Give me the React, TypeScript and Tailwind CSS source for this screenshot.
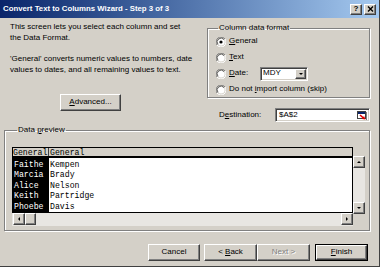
import React from "react"

const raised =
  "border border-t-white border-l-white border-r-[#404040] border-b-[#404040] shadow-[inset_-1px_-1px_0_#808080] bg-[#d4d0c8]"
const sunken =
  "border border-t-[#808080] border-l-[#808080] border-r-white border-b-white shadow-[inset_1px_1px_0_#404040,inset_-1px_-1px_0_#d4d0c8]"

function Radio({ checked = false }: { checked?: boolean }) {
  return (
    <svg width="10" height="10" viewBox="0 0 10 10" className="shrink-0">
      <path d="M9 2 A4.5 4.5 0 0 0 1 8" fill="none" stroke="#808080" strokeWidth="1" />
      <path d="M1 8 A4.5 4.5 0 0 0 9 2" fill="none" stroke="#ffffff" strokeWidth="1" />
      <circle cx="5" cy="5" r="3.6" fill="#ffffff" />
      <path d="M8 2.6 A3.4 3.4 0 0 0 2 7.4" fill="none" stroke="#404040" strokeWidth="0.8" />
      {checked && <circle cx="5" cy="5" r="1.6" fill="#000000" />}
    </svg>
  )
}

function Arrow({ dir }: { dir: "up" | "down" | "left" | "right" }) {
  const pts = {
    up: "2,5 6,5 4,3",
    down: "2,3 6,3 4,5",
    left: "5,2 5,6 3,4",
    right: "3,2 3,6 5,4",
  }[dir]
  return (
    <svg width="8" height="8" viewBox="0 0 8 8">
      <polygon points={pts} fill="#000" />
    </svg>
  )
}

function ScrollBtn({ dir }: { dir: "up" | "down" | "left" | "right" }) {
  return (
    <div className={`${raised} w-[12px] h-[12px] flex items-center justify-center shrink-0`}>
      <Arrow dir={dir} />
    </div>
  )
}

function Button({
  children,
  className = "",
  isDefault = false,
}: {
  children: React.ReactNode
  className?: string
  isDefault?: boolean
}) {
  if (isDefault) {
    return (
      <div className={`border border-black ${className}`}>
        <div className={`${raised} h-full flex items-center justify-center`}>{children}</div>
      </div>
    )
  }
  return <div className={`${raised} flex items-center justify-center ${className}`}>{children}</div>
}

const rows = [
  ["Faithe", "Kempen"],
  ["Marcia", "Brady"],
  ["Alice", "Nelson"],
  ["Keith", "Partridge"],
  ["Phoebe", "Davis"],
]

export default function App() {
  return (
    <div className="w-[380px] h-[267px] bg-[#d4d0c8] flex flex-col border-r border-b border-[#404040] text-[8px] leading-[10.5px] text-black font-['Liberation_Sans',Arial,sans-serif] overflow-hidden">
      {/* title bar */}
      <div className="h-[18px] shrink-0 flex items-center bg-gradient-to-r from-[#0a246a] to-[#a6caf0] pl-[3px] pr-[3px]">
        <span className="text-white font-bold text-[7.8px] leading-none">
          Convert Text to Columns Wizard - Step 3 of 3
        </span>
        <div className="ml-auto flex gap-[2px]">
          <div className={`${raised} w-[12px] h-[11px] flex items-center justify-center text-[8px] font-bold leading-none`}>
            ?
          </div>
          <div className={`${raised} w-[12px] h-[11px] flex items-center justify-center`}>
            <svg width="7" height="6" viewBox="0 0 7 6">
              <path d="M1 0.5 L6 5.5 M6 0.5 L1 5.5" stroke="#000" strokeWidth="1.4" />
            </svg>
          </div>
        </div>
      </div>

      {/* top area */}
      <div className="flex">
        <div className="w-[197px] pl-[10px]">
          <p className="mt-[4px]">
            This screen lets you select each column and set
            <br />
            the Data Format.
          </p>
          <p className="mt-[11px]">
            'General' converts numeric values to numbers, date
            <br />
            values to dates, and all remaining values to text.
          </p>
          <Button className="mt-[19px] ml-[50px] w-[61px] h-[17px]">
            <span>
              <u>A</u>dvanced...
            </span>
          </Button>
        </div>

        <div className="ml-[10px] w-[163px]">
          <fieldset className="mt-[5px] border border-[#808080] shadow-[1px_1px_0_#fff,inset_1px_1px_0_#fff] pl-[8px] h-[75px]">
            <legend className="px-[1px] ml-[2px]">Column data format</legend>
            <div className="h-4 flex items-center gap-[3px]">
              <Radio checked />
              <span>
                <u>G</u>eneral
              </span>
            </div>
            <div className="h-4 flex items-center gap-[3px]">
              <Radio />
              <span>
                <u>T</u>ext
              </span>
            </div>
            <div className="h-4 flex items-center gap-[3px]">
              <Radio />
              <span className="w-[28px]">
                <u>D</u>ate:
              </span>
              <div className={`${sunken} bg-white w-[48px] h-[14px] flex items-center pl-[2px] pr-[1px]`}>
                <span className="flex-1">MDY</span>
                <div className={`${raised} w-[11px] h-[10px] flex items-center justify-center`}>
                  <Arrow dir="down" />
                </div>
              </div>
            </div>
            <div className="h-4 flex items-center gap-[3px]">
              <Radio />
              <span>
                Do not <u>i</u>mport column (skip)
              </span>
            </div>
          </fieldset>

          <div className="mt-[10px] flex items-center">
            <span className="ml-[12px] w-[56px]">
              D<u>e</u>stination:
            </span>
            <div className={`${sunken} bg-white w-[95px] h-[14px] flex items-center pl-[3px] pr-[2px]`}>
              <span className="flex-1">$A$2</span>
              <svg width="10" height="9" viewBox="0 0 10 9">
                <rect x="0.5" y="0.5" width="8" height="7" fill="#fff" stroke="#404040" />
                <rect x="1" y="1" width="7" height="2" fill="#0a246a" />
                <path d="M3 4 L7 7.5" stroke="#e00000" strokeWidth="1.6" />
                <polygon points="7,5 8.5,8.5 5,8" fill="#e00000" />
                <rect x="9" y="1" width="1" height="8" fill="#808080" />
              </svg>
            </div>
          </div>
        </div>
      </div>

      {/* data preview */}
      <fieldset className="mt-[3px] ml-[4px] w-[366px] h-[106px] border border-[#808080] shadow-[1px_1px_0_#fff,inset_1px_1px_0_#fff] pl-[7px]">
        <legend className="px-[1px] ml-[5px]">
          Data <u>p</u>review
        </legend>
        <div className="mt-[11px] flex">
          <div className="w-[341px]">
            <div className="border border-black font-['Liberation_Mono',monospace] text-[8.2px]">
              <div className="flex h-[10px] leading-[10px] bg-[#d4d0c8] border-b-2 border-black">
                <div className="w-[36px] border-r border-[#404040] overflow-hidden whitespace-nowrap">General</div>
                <div className="pl-[1px]">General</div>
              </div>
              <div className="flex h-[54px] bg-white">
                <div className="w-[36px] bg-black text-white pt-[2px] pl-[1px]">
                  {rows.map((r) => (
                    <div key={r[0]} className="h-[10.5px] leading-[10.5px]">
                      {r[0]}
                    </div>
                  ))}
                </div>
                <div className="pt-[2px] pl-[1px]">
                  {rows.map((r) => (
                    <div key={r[1]} className="h-[10.5px] leading-[10.5px]">
                      {r[1]}
                    </div>
                  ))}
                </div>
              </div>
            </div>
            <div className="h-[13px] bg-[#e8e6e2] flex items-center pl-[1px]">
              <ScrollBtn dir="left" />
              <div className={`${raised} w-[11px] h-[12px]`} />
              <div className="flex-1" />
              <ScrollBtn dir="right" />
            </div>
          </div>
          <div className="w-[12px] mt-[9px] h-[58px] bg-[#e8e6e2] flex flex-col justify-between">
            <ScrollBtn dir="up" />
            <ScrollBtn dir="down" />
          </div>
        </div>
      </fieldset>

      {/* buttons */}
      <div className="mt-[13px] flex pl-[148px]">
        <Button className="w-[52px] h-[17px]">Cancel</Button>
        <Button className="ml-[4px] w-[53px] h-[17px]">
          <span>
            &lt; <u>B</u>ack
          </span>
        </Button>
        <Button className="w-[53px] h-[17px]">
          <span className="text-[#808080] [text-shadow:1px_1px_0_#fff]">Next &gt;</span>
        </Button>
        <Button isDefault className="ml-[5px] w-[53px] h-[17px]">
          <span>
            <u>F</u>inish
          </span>
        </Button>
      </div>
    </div>
  )
}
